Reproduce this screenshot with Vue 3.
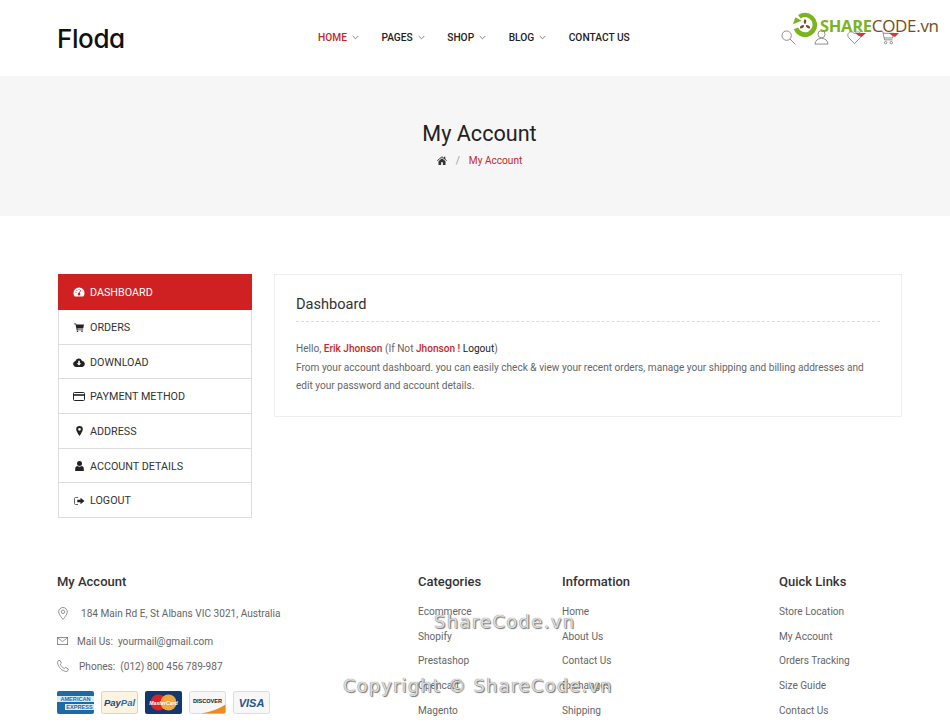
<script setup>
const nav = [
  { label: 'HOME', caret: true, active: true },
  { label: 'PAGES', caret: true },
  { label: 'SHOP', caret: true },
  { label: 'BLOG', caret: true },
  { label: 'CONTACT US', caret: false }
]
const menu = ['DASHBOARD', 'ORDERS', 'DOWNLOAD', 'PAYMENT METHOD', 'ADDRESS', 'ACCOUNT DETAILS', 'LOGOUT']
const cols = [
  { title: 'Categories', links: ['Ecommerce', 'Shopify', 'Prestashop', 'Opencart', 'Magento'] },
  { title: 'Information', links: ['Home', 'About Us', 'Contact Us', 'Exchanges', 'Shipping'] },
  { title: 'Quick Links', links: ['Store Location', 'My Account', 'Orders Tracking', 'Size Guide', 'Contact Us'] }
]
</script>

<template>
  <div class="page">
    <header class="top">
      <div class="logo">Floda</div>
      <nav class="nav">
        <a v-for="n in nav" :key="n.label" class="nav-item" :class="{ on: n.active }">
          {{ n.label }}
          <svg v-if="n.caret" width="7" height="5" viewBox="0 0 7 5"><path d="M.7 1 3.5 3.8 6.3 1" fill="none" stroke="currentColor" stroke-width=".8"/></svg>
        </a>
      </nav>
      <div class="tools">
        <svg width="15" height="15" viewBox="0 0 16 16" fill="none" stroke="#888" stroke-width="1"><circle cx="6" cy="6" r="5"/><path d="m9.6 9.6 5.6 5.6"/></svg>
        <svg width="15" height="15" viewBox="0 0 16 16" fill="none" stroke="#888" stroke-width="1"><circle cx="8" cy="4.5" r="3.8"/><path d="M1 15c.5-4 3-6 7-6s6.500 2 7 6z"/></svg>
        <svg width="15" height="15" viewBox="0 0 16 16" fill="none" stroke="#888" stroke-width="1"><path d="M8 14.500 1.800 8.200C-.6 5 2 1.600 4.800 2 6.400 2.200 7.300 3 8 4.200 8.700 3 9.600 2.200 11.200 2c2.800-.4 5.400 3 3 6.200z"/></svg>
        <svg width="15" height="15" viewBox="0 0 16 16" fill="none" stroke="#888" stroke-width="1"><path d="M.5 1.500h2.400l2 9h8.400M3.300 3.500h11.500l-1.400 5H4.400"/><circle cx="6" cy="13.500" r="1.300"/><circle cx="12" cy="13.500" r="1.300"/></svg>
      </div>
    </header>

    <section class="banner">
      <h1>My Account</h1>
      <div class="crumb">
        <svg width="10" height="9" viewBox="0 0 10 9"><path d="M5 .3 0 4.600l.5.500L5 1.300l4.500 3.800.5-.5-1.700-1.500V.8H7v1.200zM1.500 5.300V9h2.600V6.300h1.800V9h2.600V5.300L5 2.300z" fill="#333"/></svg>
        <span class="sep">/</span>
        <span class="cur">My Account</span>
      </div>
    </section>

    <main class="main">
      <aside class="side">
        <a v-for="(m, i) in menu" :key="m" class="side-item" :class="{ on: i === 0 }">
          <span class="ico">
            <svg v-if="i === 0" width="12" height="10" viewBox="0 0 12 10"><path d="M6 .5a5.500 5.500 0 0 0-5.500 5.500c0 1.400.4 2.700 1.300 3.500h8.400c.9-.8 1.300-2.100 1.300-3.500A5.500 5.500 0 0 0 6 .5zm0 5.300a1.300 1.300 0 1 0 .1 2.600 1.300 1.300 0 0 0-.1-2.600z" fill="#fff" fill-rule="evenodd"/><path d="m5.800 7 2-4" stroke="#cf2121" stroke-width=".8"/><path d="M2.500 5.500h1M3.500 3.200l.7.7M6 2v1" stroke="#cf2121" stroke-width=".7"/></svg>
            <svg v-else-if="i === 1" width="10" height="9" viewBox="0 0 10 9"><path d="M0 .5h2l.4 1H10L9.200 5.500H3.300l.2 1h5.700v.8H2.700L1.500 1.300H0z" fill="#222"/><circle cx="3.500" cy="8.200" r=".8" fill="#222"/><circle cx="8" cy="8.200" r=".8" fill="#222"/></svg>
            <svg v-else-if="i === 2" width="12" height="9" viewBox="0 0 12 9"><path d="M3 9a3 3 0 0 1-.6-5.900A3.500 3.500 0 0 1 9 2.700 3.200 3.200 0 0 1 9.300 9z" fill="#222"/><path d="M5.200 2.800h1.600v2.400h1.500L6 7.600 3.700 5.200h1.500z" fill="#fff"/></svg>
            <svg v-else-if="i === 3" width="12" height="9" viewBox="0 0 12 9" fill="none"><rect x=".5" y=".5" width="11" height="8" rx="1" stroke="#222"/><path d="M.5 3h11" stroke="#222" stroke-width="1.600"/></svg>
            <svg v-else-if="i === 4" width="7" height="10" viewBox="0 0 7 10"><path d="M3.500 0A3.300 3.300 0 0 0 .2 3.300C.2 5.400 3.500 10 3.500 10s3.300-4.600 3.300-6.700A3.300 3.300 0 0 0 3.500 0zm0 4.700a1.400 1.400 0 1 1 0-2.800 1.400 1.400 0 0 1 0 2.800z" fill="#222" fill-rule="evenodd"/></svg>
            <svg v-else-if="i === 5" width="9" height="10" viewBox="0 0 9 10"><circle cx="4.500" cy="2.600" r="2.500" fill="#222"/><path d="M.2 10V7.700C.2 6 1.400 5 2.300 5c.6.400 1.300.7 2.200.7S6.100 5.400 6.700 5c.9 0 2.100 1 2.100 2.700V10z" fill="#222"/></svg>
            <svg v-else width="11" height="8" viewBox="0 0 11 8"><path d="M4 .5H1.500a1 1 0 0 0-1 1v5a1 1 0 0 0 1 1H4" fill="none" stroke="#555" stroke-width=".9"/><path d="M6.500.7 10.500 4l-4 3.300V5.300H3.300V2.700h3.200z" fill="#222"/></svg>
          </span>
          {{ m }}
        </a>
      </aside>
      <article class="panel">
        <h2>Dashboard</h2>
        <p>
          Hello, <b>Erik Jhonson</b> (If Not <b>Jhonson !</b> <span class="dark">Logout</span>)<br>
          From your account dashboard. you can easily check &amp; view your recent orders, manage your shipping and billing addresses and edit your password and account details.
        </p>
      </article>
    </main>

    <footer class="foot">
      <div class="col">
        <h3>My Account</h3>
        <div class="addr a1">
          <svg width="10" height="13" viewBox="0 0 10 13" fill="none" stroke="#777" stroke-width=".8"><path d="M5 .5A4.300 4.300 0 0 0 .7 4.800C.7 7.500 5 12.300 5 12.300s4.300-4.800 4.300-7.500A4.300 4.300 0 0 0 5 .5z"/><circle cx="5" cy="4.800" r="1.700"/></svg>
          <span>184 Main Rd E, St Albans VIC 3021, Australia</span>
        </div>
        <div class="addr a2">
          <svg width="11" height="8" viewBox="0 0 11 8" fill="none" stroke="#777" stroke-width=".8"><rect x=".4" y=".4" width="10.200" height="7.200"/><path d="m.4.6 5.100 4 5.100-4"/></svg>
          <span>Mail Us:&nbsp; yourmail@gmail.com</span>
        </div>
        <div class="addr a3">
          <svg width="12" height="12" viewBox="0 0 12 12" fill="none" stroke="#777" stroke-width=".8"><path d="M1.200.8 3 .5l1.400 2.700-1.100 1c.6 1.800 2.200 3.500 4 4.300l1.200-1.100L11.300 9l-.4 1.700c-.3.600-1 .9-1.700.8C4.700 10.800 1.200 7 .5 2.700.4 1.900.7 1.100 1.200.8z"/></svg>
          <span>Phones:&nbsp; (012) 800 456 789-987</span>
        </div>
        <div class="pays">
          <svg width="37" height="23" viewBox="0 0 37 23"><rect width="37" height="23" rx="2" fill="#1d6aa5"/><rect y="5" width="37" height="6" fill="#dceaf4"/><rect x="8" y="13" width="29" height="6" fill="#dceaf4"/><text x="18.500" y="10.300" text-anchor="middle" font-size="5.600" font-family="Liberation Sans" fill="#1d6aa5" font-weight="700">AMERICAN</text><text x="22.500" y="18.300" text-anchor="middle" font-size="5.600" font-family="Liberation Sans" fill="#1d6aa5" font-weight="700">EXPRESS</text></svg>
          <svg width="37" height="23" viewBox="0 0 37 23"><rect x=".5" y=".5" width="36" height="22" rx="2" fill="#fdf3e1" stroke="#f3cf9b"/><text x="18.500" y="15" text-anchor="middle" font-size="9.500" font-style="italic" font-weight="700" font-family="Liberation Sans" fill="#2a6fb5"><tspan fill="#1d4480">Pay</tspan>Pal</text></svg>
          <svg width="37" height="23" viewBox="0 0 37 23"><rect width="37" height="23" rx="2" fill="#12396f"/><circle cx="13.500" cy="11.500" r="8" fill="#d9222a"/><circle cx="23.500" cy="11.500" r="8" fill="#f3a73b"/><text x="18.500" y="13.500" text-anchor="middle" font-size="5.200" font-family="Liberation Sans" font-weight="700" font-style="italic" fill="#fff">MasterCard</text></svg>
          <svg width="37" height="23" viewBox="0 0 37 23"><rect x=".5" y=".5" width="36" height="22" rx="2" fill="#f7f7f7" stroke="#ddd"/><path d="M12 22.500c10-1.500 18-5 24.500-9v7c0 1-.8 2-2 2z" fill="#ef8a23"/><text x="18.500" y="11.500" text-anchor="middle" font-size="5.600" font-family="Liberation Sans" font-weight="700" fill="#222">DISCOVER</text></svg>
          <svg width="37" height="23" viewBox="0 0 37 23"><rect x=".5" y=".5" width="36" height="22" rx="2" fill="#f7f7f7" stroke="#ddd"/><text x="18.500" y="15.500" text-anchor="middle" font-size="11" font-style="italic" font-weight="700" font-family="Liberation Sans" fill="#23558f">VISA</text></svg>
        </div>
      </div>
      <div v-for="c in cols" :key="c.title" class="col">
        <h3>{{ c.title }}</h3>
        <ul><li v-for="l in c.links" :key="l">{{ l }}</li></ul>
      </div>
    </footer>

    <div class="mark">
      <svg width="26" height="26" viewBox="0 0 30 30"><path d="M15 1a14 14 0 1 1-13 19l5-2a8.700 8.700 0 1 0 3-10.500L7 3.500A14 14 0 0 1 15 1z" fill="#7ab51d"/><path d="M1 14 4 6l7 4z" fill="#7ab51d"/><path d="M15 8c2 2 2 4 0 6-2-2-2-4 0-6zM9 19c0-3 2-4 5-4 0 3-2 4-5 4zm12 0c-3 0-5-1-5-4 3 0 5 1 5 4z" fill="#7a4a20"/></svg>
      <span class="m-g">SHARE</span><span class="m-b">CODE.vn</span>
    </div>
    <i class="rib r1"></i><i class="rib r2"></i>
    <div class="wm w1">ShareCode.vn</div>
    <div class="wm w2">Copyright © ShareCode.vn</div>
  </div>
</template>

<style>
html, body { margin: 0; overflow: hidden; }
</style>

<style scoped>
.page { position: relative; width: 950px; height: 723px; overflow: hidden; background: #fff; font-family: Roboto, sans-serif; color: #666; }
.top { height: 76px; padding: 0 55px 0 57px; display: flex; align-items: center; position: relative; box-sizing: border-box; }
.logo { font-family: Inter, sans-serif; font-size: 26px; font-weight: 500; color: #111; letter-spacing: -.4px; width: 261px; font-feature-settings: "cv11"; }
.nav { display: flex; gap: 22.500px; font-size: 10.200px; font-weight: 500; color: #222; flex: 1; margin-top: -2px; }
.nav-item { display: flex; align-items: center; gap: 5px; }
.nav-item.on { color: #c62828; }
.nav-item svg { color: #666; margin-top: 1px; }
.tools { display: flex; gap: 18px; margin-top: -1px; }
.banner { height: 140px; background: #f6f6f6; display: flex; flex-direction: column; align-items: center; box-sizing: border-box; padding: 44px 0 0 9px; }
.banner h1 { margin: 0; font-size: 21.600px; line-height: 27px; font-weight: 400; color: #222; }
.crumb { display: flex; align-items: center; font-size: 10.100px; margin-top: 6px; height: 14px; }
.sep { margin: 0 9px; color: #999; }
.cur { color: #c62828; }
.main { display: flex; gap: 22px; padding: 58px 48px 0 58px; align-items: flex-start; }
.side { width: 194px; flex: none; box-sizing: border-box; }
.side-item { height: 34.700px; box-sizing: border-box; border: 1px solid #ddd; border-top: 0; display: flex; align-items: center; padding: 1px 0 0 14px; font-size: 10.750px; color: #333; }
.side-item.on { height: 36px; background: #cf2121; border: 0; color: #fff; padding: 0 0 0 15px; }
.ico { width: 17px; display: flex; justify-content: center; padding-right: 5px; box-sizing: border-box; }
.panel { flex: 1; height: 143px; border: 1px solid #eee; padding: 21px; box-sizing: border-box; }
.panel h2 { margin: -1px 0 0; font-size: 14.600px; line-height: 18px; font-weight: 400; color: #333; padding-bottom: 8px; border-bottom: 1px dashed #ddd; }
.panel p { margin: 18px 0 0; font-size: 10.100px; line-height: 18.500px; color: #666; }
.panel b { font-weight: 500; color: #c62828; }
.dark { color: #222; }
.foot { position: absolute; left: 57px; top: 574px; width: 836px; display: grid; grid-template-columns: 361px 144px 217px 1fr; }
.col h3 { margin: 0; font-size: 13px; line-height: 16px; font-weight: 500; color: #333; }
.col ul { list-style: none; margin: 10px 0 0; padding: 0; font-size: 10.100px; color: #666; }
.col li { height: 24.700px; line-height: 24.700px; }
.addr { display: flex; align-items: center; font-size: 10.100px; height: 14px; }
.a1 { margin-top: 16.500px; padding-left: 1px; gap: 13px; }
.a2 { margin-top: 13.500px; gap: 9px; }
.a3 { margin-top: 11px; gap: 10px; }
.pays { display: flex; gap: 7px; margin-top: 18px; }
.pays svg { flex: none; }
.mark { position: absolute; left: 792px; top: 12px; display: flex; align-items: center; font-family: "Open Sans", sans-serif; letter-spacing: -.3px; }
.mark svg { margin-right: 2px; }
.m-g { color: #7ab51d; font-weight: 700; font-size: 16.500px; }
.m-b { color: #7a4a20; font-weight: 400; font-size: 17px; }
.rib { position: absolute; height: 4px; background: #d33; clip-path: polygon(0 0, 100% 0, 60% 100%, 30% 60%); }
.r1 { left: 855px; top: 33px; width: 11px; }
.r2 { left: 889px; top: 33px; width: 10px; }
.wm { position: absolute; font-family: "DejaVu Sans", sans-serif; color: rgba(238,238,238,.9); text-shadow: 0 0 1px #555, 1px 1px 1px #777; white-space: nowrap; letter-spacing: 1.100px; }
.w1 { left: 434px; top: 611px; font-size: 18px; letter-spacing: 1.300px; }
.w2 { left: 343px; top: 675px; font-size: 18px; }
</style>
